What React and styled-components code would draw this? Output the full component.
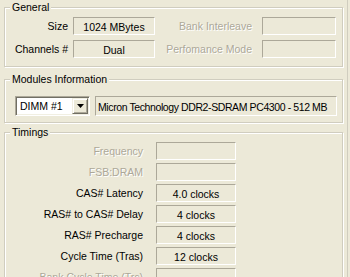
import React from "react";
import styled, { createGlobalStyle } from "styled-components";

const GlobalStyle = createGlobalStyle`
  html, body {
    margin: 0;
    padding: 0;
    background: #ECE9D8;
  }
  body {
    font-family: "Liberation Sans", Arial, sans-serif;
    font-size: 10.5px;
    color: #000;
    overflow: hidden;
  }
`;

const Page = styled.div`
  box-sizing: border-box;
  width: 348px;
  height: 277px;
  padding: 0 4px 0 4px;
  border-right: 1px solid #D0CDBF;
  overflow: hidden;
  display: flex;
  flex-direction: column;
`;

const Group = styled.div`
  position: relative;
  flex-shrink: 0;
  margin-top: ${(p) => p.$top}px;
  border: 1px solid #D0CDBF;
  box-shadow: inset 1px 1px 0 #fff, 1px 1px 0 #fff;
  padding: ${(p) => p.$pad};
`;

const Legend = styled.span`
  position: absolute;
  top: -7px;
  left: 5px;
  padding: 0 2px;
  line-height: 13px;
  background: #ECE9D8;
`;

const GeneralGrid = styled.div`
  display: grid;
  grid-template-columns: 63px 82px 1fr 74px;
  grid-auto-rows: 18px;
  column-gap: 5px;
  row-gap: 5px;
`;

const Label = styled.div`
  display: flex;
  align-items: center;
  justify-content: flex-end;
  white-space: nowrap;
  padding-right: ${(p) => p.$gap || 0}px;
  color: ${(p) => (p.$off ? "#ACA899" : "#000")};
  text-shadow: ${(p) => (p.$off ? "1px 1px 0 #fff" : "none")};
`;

const Field = styled.div`
  box-sizing: border-box;
  height: 18px;
  display: flex;
  align-items: center;
  justify-content: ${(p) => (p.$left ? "flex-start" : "center")};
  padding: 1px 3px 0;
  white-space: nowrap;
  overflow: hidden;
  border-style: solid;
  border-width: 1px;
  border-color: #ACA899 #fff #fff #ACA899;
`;

const ModuleRow = styled.div`
  display: flex;
  gap: 5px;
  padding-left: 10px;
`;

const Combo = styled.div`
  box-sizing: border-box;
  width: 75px;
  height: 20px;
  display: flex;
  align-items: center;
  background: #fff;
  border-style: solid;
  border-width: 1px;
  border-color: #ACA899 #fff #fff #ACA899;
  box-shadow: inset 1px 1px 0 #716F64, inset -1px -1px 0 #F1EFE2;
  padding: 1px 1px 1px 4px;
`;

const ComboText = styled.span`
  flex: 1;
`;

const ArrowButton = styled.div`
  box-sizing: border-box;
  width: 16px;
  height: 16px;
  display: flex;
  align-items: center;
  justify-content: center;
  background: #ECE9D8;
  border-style: solid;
  border-width: 1px;
  border-color: #F1EFE2 #716F64 #716F64 #F1EFE2;
  box-shadow: inset 1px 1px 0 #fff, inset -1px -1px 0 #ACA899;
`;

const WideField = styled(Field)`
  flex: 1;
  height: 20px;
  padding-left: 2px;
  letter-spacing: -0.4px;
`;

const TimingGrid = styled.div`
  display: grid;
  grid-template-columns: 138px 80px;
  grid-auto-rows: 18px;
  column-gap: 13px;
  row-gap: 3px;
`;

const timings = [
  { label: "Frequency", value: "", off: true },
  { label: "FSB:DRAM", value: "", off: true },
  { label: "CAS# Latency", value: "4.0 clocks" },
  { label: "RAS# to CAS# Delay", value: "4 clocks" },
  { label: "RAS# Precharge", value: "4 clocks" },
  { label: "Cycle Time (Tras)", value: "12 clocks" },
  { label: "Bank Cycle Time (Trc)", value: "", off: true },
  { label: "Command Rate (CR)", value: "", off: true },
];

export default function App() {
  return (
    <>
      <GlobalStyle />
      <Page>
        <Group $top={7} $pad="9px 6px 8px 0">
          <Legend>General</Legend>
          <GeneralGrid>
            <Label>Size</Label>
            <Field>1024 MBytes</Field>
            <Label $off $gap={5}>Bank Interleave</Label>
            <Field />
            <Label>Channels #</Label>
            <Field>Dual</Field>
            <Label $off $gap={5}>Perfomance Mode</Label>
            <Field />
          </GeneralGrid>
        </Group>

        <Group $top={12} $pad="16px 5px 6px 0">
          <Legend>Modules Information</Legend>
          <ModuleRow>
            <Combo>
              <ComboText>DIMM #1</ComboText>
              <ArrowButton>
                <svg width="7" height="4" viewBox="0 0 7 4">
                  <path d="M0 0h7L3.5 4z" fill="#000" />
                </svg>
              </ArrowButton>
            </Combo>
            <WideField $left>Micron Technology DDR2-SDRAM PC4300 - 512 MB</WideField>
          </ModuleRow>
        </Group>

        <Group $top={9} $pad="9px 0 20px 0">
          <Legend>Timings</Legend>
          <TimingGrid>
            {timings.map((t) => (
              <React.Fragment key={t.label}>
                <Label $off={t.off}>{t.label}</Label>
                <Field>{t.value}</Field>
              </React.Fragment>
            ))}
          </TimingGrid>
        </Group>
      </Page>
    </>
  );
}
